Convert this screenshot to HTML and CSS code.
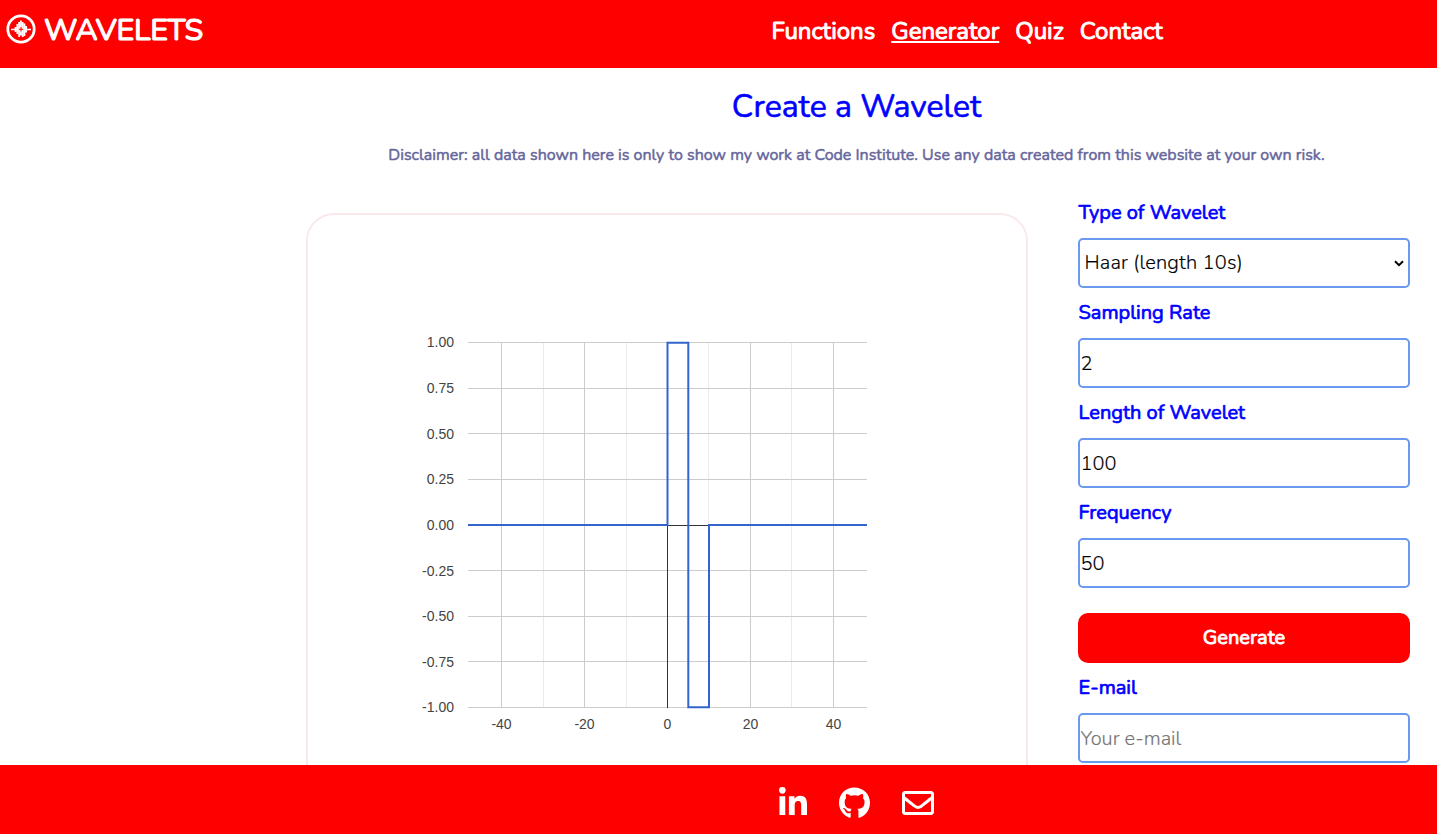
FILE: index.html
```html
<!DOCTYPE html>
<html lang="en">
<head>
<meta charset="utf-8">
<title>Wavelets - Generator</title>
<link rel="stylesheet" href="styles.css">
</head>
<body>
<header class="header">
  <a class="brand">
    <svg class="logo" viewBox="0 0 30 30" width="30" height="30" fill="none" stroke="#fff"><circle cx="15" cy="15" r="13.2" stroke-width="2.800"/><path d="M5 15.500h20" stroke-width="1.500"/><path d="M9.500 13v5M11.300 10v10M13.100 8v15M14.900 6.500v15M16.700 8v15M18.500 9.500v12.500M20.200 12v6.500" stroke-width="1.700"/><path d="M15 13v4.500M12.800 15.300h4.400" stroke="#f00" stroke-width="1"/></svg>
    <span class="brand-name">WAVELETS</span>
  </a>
  <nav class="nav">
    <a>Functions</a><a class="active">Generator</a><a>Quiz</a><a>Contact</a>
  </nav>
</header>
<main class="main">
  <div class="intro">
    <h1>Create a Wavelet</h1>
    <p>Disclaimer: all data shown here is only to show my work at Code Institute. Use any data created from this website at your own risk.</p>
  </div>
  <div class="columns">
    <section class="panel">
      <svg class="chart" viewBox="308 215 718 700" width="718" height="700">
        <g shape-rendering="crispEdges" fill="none">
          <path class="minor" d="M543.5 342V708M626.5 342V708M708.5 342V708M791.5 342V708"/>
          <path class="major" d="M501.5 342V708M584.5 342V708M750.5 342V708M833.5 342V708M468 342.5H867M468 388.5H867M468 433.5H867M468 479.5H867M468 570.500H867M468 616.500H867M468 661.500H867M468 707.500H867"/>
          <path class="axis" d="M667.5 342V708M468 525.500H867"/>
        </g>
        <path class="wave" d="M468 525H667.500V342.700H688.300V707.300H709V525H867"/>
        <g class="labels" text-anchor="end">
          <text x="454" y="347">1.00</text><text x="454" y="393">0.75</text><text x="454" y="439">0.50</text><text x="454" y="484">0.25</text><text x="454" y="530">0.00</text><text x="454" y="576">-0.25</text><text x="454" y="621">-0.50</text><text x="454" y="667">-0.75</text><text x="454" y="712">-1.00</text>
        </g>
        <g class="labels" text-anchor="middle">
          <text x="501.500" y="729">-40</text><text x="584.500" y="729">-20</text><text x="667.500" y="729">0</text><text x="750.500" y="729">20</text><text x="833.500" y="729">40</text>
        </g>
      </svg>
    </section>
    <form class="form">
      <label>Type of Wavelet</label>
      <div class="field select"><span>Haar (length 10s)</span><svg viewBox="0 0 10 7" width="10" height="7"><path d="M1 1.200l4 4 4-4" fill="none" stroke="#000" stroke-width="2"/></svg></div>
      <label>Sampling Rate</label>
      <input class="field" type="text" value="2">
      <label>Length of Wavelet</label>
      <input class="field" type="text" value="100">
      <label>Frequency</label>
      <input class="field" type="text" value="50">
      <button class="generate" type="button">Generate</button>
      <label>E-mail</label>
      <input class="field" type="text" placeholder="Your e-mail">
    </form>
  </div>
</main>
<footer class="footer">
  <svg viewBox="0 0 448 512" width="28" height="32"><path d="M100.280 448H7.400V148.900h92.880zM53.790 108.100C24.090 108.100 0 83.500 0 53.800a53.790 53.790 0 0 1 107.580 0c0 29.700-24.100 54.300-53.790 54.300zM447.900 448h-92.680V302.400c0-34.700-.700-79.200-48.290-79.200-48.290 0-55.690 37.700-55.690 76.700V448h-92.780V148.900h89.080v40.800h1.300c12.400-23.500 42.690-48.300 87.880-48.300 94 0 111.280 61.900 111.280 142.300V448z"/></svg>
  <svg viewBox="0 0 496 512" width="31" height="32"><path d="M165.900 397.400c0 2-2.300 3.600-5.200 3.600-3.300.3-5.600-1.300-5.600-3.600 0-2 2.300-3.600 5.200-3.600 3-.3 5.600 1.300 5.600 3.600zm-31.100-4.500c-.7 2 1.300 4.300 4.300 4.900 2.600 1 5.600 0 6.200-2s-1.300-4.300-4.300-5.200c-2.600-.7-5.500.3-6.200 2.300zm44.200-1.700c-2.900.7-4.900 2.600-4.600 4.900.3 2 2.900 3.300 5.900 2.600 2.900-.7 4.900-2.600 4.600-4.600-.3-1.900-3-3.200-5.900-2.900zM244.800 8C106.100 8 0 113.300 0 252c0 110.900 69.800 205.800 169.500 239.200 12.800 2.300 17.300-5.600 17.300-12.100 0-6.200-.3-40.400-.3-61.400 0 0-70 15-84.700-29.800 0 0-11.400-29.100-27.800-36.600 0 0-22.900-15.700 1.600-15.400 0 0 24.900 2 38.600 25.800 21.900 38.600 58.600 27.500 72.900 20.900 2.300-16 8.800-27.100 16-33.700-55.900-6.200-112.300-14.300-112.300-110.500 0-27.500 7.600-41.300 23.600-58.900-2.600-6.500-11.100-33.300 2.600-67.900 20.900-6.500 69 27 69 27 20-5.600 41.500-8.500 62.800-8.500s42.800 2.900 62.800 8.500c0 0 48.100-33.600 69-27 13.700 34.700 5.200 61.400 2.600 67.900 16 17.700 25.800 31.500 25.800 58.900 0 96.500-58.900 104.200-114.800 110.500 9.200 7.900 17 22.900 17 46.400 0 33.700-.3 75.400-.3 83.600 0 6.500 4.600 14.400 17.300 12.100C428.200 457.800 496 362.900 496 252 496 113.300 383.500 8 244.800 8z"/></svg>
  <svg viewBox="0 0 512 512" width="32" height="32"><path d="M464 64H48C21.490 64 0 85.490 0 112v288c0 26.510 21.490 48 48 48h416c26.510 0 48-21.490 48-48V112c0-26.510-21.490-48-48-48zm0 48v40.805c-22.422 18.259-58.168 46.651-134.587 106.490-16.841 13.247-50.201 45.072-73.413 44.701-23.208.375-56.579-31.459-73.413-44.701C106.180 199.465 70.425 171.067 48 152.805V112h416zM48 400V214.398c22.914 18.251 55.409 43.862 104.938 82.646 21.857 17.205 60.134 55.186 103.062 54.955 42.717.231 80.509-37.199 103.053-54.947 49.528-38.783 82.032-64.401 104.947-82.653V400H48z"/></svg>
</footer>
</body>
</html>
```
FILE: styles.css
```css
* { box-sizing: border-box; }
body { margin: 0; height: 834px; overflow: hidden; display: flex; flex-direction: column; background: #fff; font-family: Nunito, Lato, sans-serif; }
.header { height: 68px; flex: none; display: flex; align-items: flex-start; background: #f00; color: #fff; }
.brand { display: flex; width: 771.500px; padding: 14px 0 0 6px; gap: 8px; }
.brand-name { font-size: 30.400px; line-height: 33px; letter-spacing: -.25px; -webkit-text-stroke: 1.200px; }
.nav { display: flex; gap: 16px; padding-top: 15px; font-size: 24px; line-height: 32px; -webkit-text-stroke: 1px; white-space: nowrap; }
.active { text-decoration: underline; text-decoration-thickness: 2px; text-underline-offset: 2px; }
.main { flex: 1; min-height: 0; overflow: hidden; }
.intro { margin-left: 276px; text-align: center; white-space: nowrap; }
h1 { margin: 0; padding-top: 19px; font-size: 32px; line-height: 40px; font-weight: 400; color: #00f; -webkit-text-stroke: .6px; }
.intro p { margin: 0; padding-top: 18px; font-size: 16px; line-height: 20px; color: #66669c; -webkit-text-stroke: .5px; }
.columns { display: flex; gap: 50px; padding-left: 306px; align-items: flex-start; }
.panel { width: 722px; height: 760px; margin-top: 48px; border: 2px solid #fae9ea; border-radius: 28px; overflow: hidden; }
.chart { display: block; }
.minor { stroke: #ebebeb; }
.major { stroke: #ccc; }
.axis { stroke: #333; }
.wave { fill: none; stroke: #36c; stroke-width: 2; }
.labels { font: 14px "Liberation Sans", sans-serif; fill: #444; }
.form { width: 332px; margin-top: 32px; display: flex; flex-direction: column; align-items: stretch; }
.form label { height: 41px; padding: 1px 0 0 .5px; font-size: 20px; line-height: 30px; color: #00f; -webkit-text-stroke: .7px; white-space: nowrap; }
.field { height: 50px; margin: 0 0 9px; padding: 0 .5px; border: 2px solid #6a99ee; border-radius: 5px; background: #fff; color: #000; font: 300 20px Nunito, Lato, sans-serif; -webkit-text-stroke: .15px; outline: none; }
.field::placeholder { color: #757575; }
.select { display: flex; align-items: center; justify-content: space-between; padding: 0 4px 0 4.500px; letter-spacing: .18px; }
.select span { padding-bottom: 2px; }
.generate { height: 50px; margin: 16px 0 9px; padding: 0 0 2px; border: 0; border-radius: 10px; background: #f00; color: #fff; font: 20px Nunito, Lato, sans-serif; -webkit-text-stroke: .9px; }
.footer { height: 69px; flex: none; padding: 22px 0 0 779px; display: flex; gap: 32px; background: #f00; }
.footer svg { fill: #fff; }
```
